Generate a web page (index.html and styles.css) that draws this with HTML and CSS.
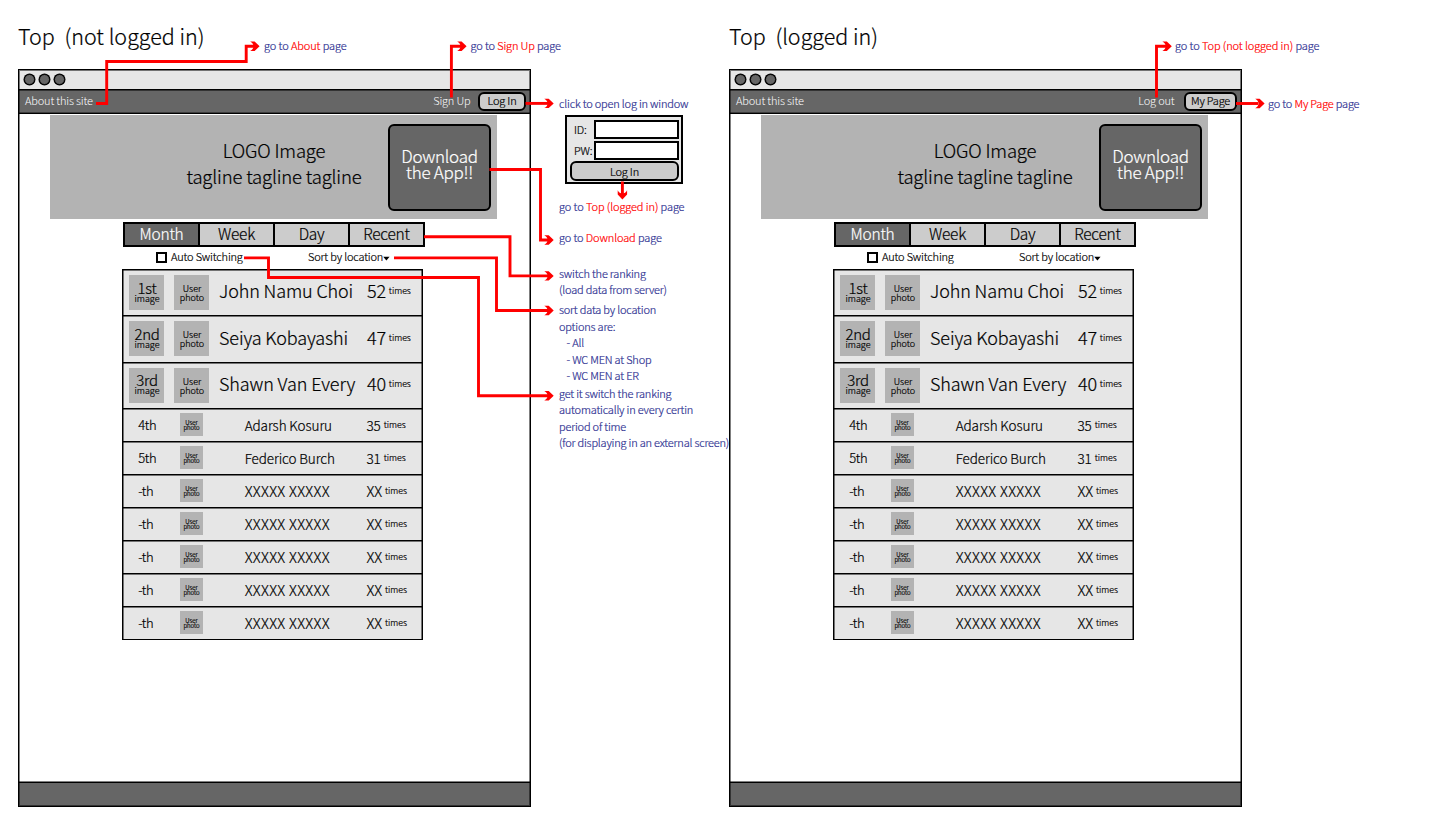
FILE: index.html
```html
<!DOCTYPE html>
<html lang="en">
<head>
<meta charset="utf-8">
<title>Top page wireframe</title>
<link rel="stylesheet" href="styles.css">
</head>
<body>
<main class="sheet">
  <section class="board" data-board="out">
    <header class="board-head">
      <h1 class="board-title">Top&nbsp; (not logged in)</h1>
      <p class="note note-about">go to <b>About</b> page</p>
      <p class="note note-signup">go to <b>Sign Up</b> page</p>
    </header>
    <div class="window">
      <div class="titlebar"><i class="dot"></i><i class="dot"></i><i class="dot"></i></div>
      <nav class="nav"><a class="nav-about">About this site</a><a class="nav-link">Sign Up</a><button class="nav-button">Log In</button></nav>
      <div class="page"></div>
      <footer class="footer"></footer>
    </div>
  </section>

  <aside class="notes">
    <p class="note">click to open log in window</p>
    <form class="login">
      <label class="field"><span class="field-name">ID:</span><span class="input"></span></label>
      <label class="field"><span class="field-name">PW:</span><span class="input"></span></label>
      <button class="login-button" type="button">Log In</button>
    </form>
    <p class="note note-top">go to <b>Top (logged in)</b> page</p>
    <p class="note note-download">go to <b>Download</b> page</p>
    <p class="note note-switch">switch the ranking<br>(load data from server)</p>
    <div class="note note-sort">sort data by location<br>options are:
      <ul class="note-list"><li>- All</li><li>- WC MEN at Shop</li><li>- WC MEN at ER</li></ul>
    </div>
    <p class="note note-auto">get it switch the ranking<br>automatically in every certin<br>period of time<br>(for displaying in an external screen)</p>
  </aside>

  <section class="board" data-board="in">
    <header class="board-head">
      <h1 class="board-title">Top&nbsp; (logged in)</h1>
      <p class="note note-logout">go to <b>Top (not logged in)</b> page</p>
    </header>
    <div class="window">
      <div class="titlebar"><i class="dot"></i><i class="dot"></i><i class="dot"></i></div>
      <nav class="nav"><a class="nav-about">About this site</a><a class="nav-link nav-link-out">Log out</a><button class="nav-button nav-button-wide">My Page</button></nav>
      <div class="page"></div>
      <footer class="footer"></footer>
    </div>
  </section>

  <aside class="notes notes-right">
    <p class="note">go to <b>My Page</b> page</p>
  </aside>

  <svg class="arrows" width="1440" height="840" viewBox="0 0 1440 840">
    <defs>
      <path id="head" d="M0 0L-5 -4.7H-9.4Q-6.2 -3 -6.2 0Q-6.2 3 -9.4 4.7H-5Z"/>
    </defs>
    <g class="arrow-lines">
      <path d="M96 103.5H106.7V61.5H246.2V46.3H254"/>
      <path d="M451.4 97.5V46.3H461"/>
      <path d="M525.5 103.4H548"/>
      <path d="M489.5 169.5H540.5V240H548"/>
      <path d="M424 236.8H510V275.9H548"/>
      <path d="M394 257.9H496.5V310.5H548"/>
      <path d="M244 257.9H268.5V277.5H478.5V395.8H548"/>
      <path d="M622.4 181.5V194"/>
      <path d="M1156.5 97.5V46.3H1166"/>
      <path d="M1236 103.5H1258"/>
    </g>
    <g class="arrow-heads">
      <use href="#head" x="259.6" y="46.3"/>
      <use href="#head" x="466.6" y="46.3"/>
      <use href="#head" x="553.7" y="103.4"/>
      <use href="#head" x="553.7" y="240"/>
      <use href="#head" x="553.7" y="275.9"/>
      <use href="#head" x="553.7" y="310.5"/>
      <use href="#head" x="553.7" y="395.8"/>
      <use href="#head" transform="translate(622.4 199.6) rotate(90)"/>
      <use href="#head" x="1171.8" y="46.3"/>
      <use href="#head" x="1264.6" y="103.5"/>
    </g>
  </svg>
</main>

<template id="page-template">
  <div class="banner">
    <div class="banner-text">LOGO Image<br>tagline tagline tagline</div>
    <div class="download">Download<br>the App!!</div>
  </div>
  <div class="tabs">
    <span class="tab tab-active">Month</span><span class="tab">Week</span><span class="tab">Day</span><span class="tab">Recent</span>
  </div>
  <div class="options">
    <span class="checkbox"></span><span class="option-auto">Auto Switching</span>
    <span class="option-sort">Sort by location</span>
    <svg class="caret" width="7" height="5" viewBox="0 0 7 5"><path d="M0.2 0.7H6.6L3.4 4.4Z"/></svg>
  </div>
  <div class="ranking"></div>
</template>
<script src="ranking.js"></script>
</body>
</html>
```
FILE: ranking.js
```js
const leaders = [
  ["1st", "John Namu Choi", "52"],
  ["2nd", "Seiya Kobayashi", "47"],
  ["3rd", "Shawn Van Every", "40"]
];
const others = [
  ["4th", "Adarsh Kosuru", "35"],
  ["5th", "Federico Burch", "31"]
];
for (let i = 0; i < 5; i++) others.push(["-th", "XXXXX XXXXX", "XX"]);

const leaderRow = ([rank, name, count]) => `
  <div class="row row-leader">
    <div class="tile"><span class="tile-rank">${rank}</span><span class="tile-label">image</span></div>
    <div class="tile tile-user">User<br>photo</div>
    <div class="name">${name}</div>
    <div class="count">${count}<small class="times">times</small></div>
  </div>`;

const plainRow = ([rank, name, count]) => `
  <div class="row row-plain">
    <div class="rank">${rank}</div>
    <div class="thumb"><span>User<br>photo</span></div>
    <div class="name${name.startsWith("X") ? " name-blank" : ""}">${name}</div>
    <div class="count"><span class="${count === "XX" ? "count-blank" : ""}">${count}</span><small class="times">times</small></div>
  </div>`;

const template = document.getElementById("page-template");
document.querySelectorAll(".page").forEach(page => {
  page.appendChild(template.content.cloneNode(true));
  page.querySelector(".ranking").innerHTML =
    leaders.map(leaderRow).join("") + others.map(plainRow).join("");
});
```
FILE: styles.css
```css
* { box-sizing: border-box; }

body {
  margin: 0;
  background: #fff;
  color: #000;
  font: 300 11px/16.5px "Noto Sans CJK JP", "Open Sans", sans-serif;
  letter-spacing: -0.18px;
  -webkit-text-stroke: 0.2px currentColor;
}

h1, p, ul { margin: 0; padding: 0; font-weight: 300; }
b { font-weight: 300; color: #f00; -webkit-text-stroke-color: #f00; }
button { padding: 0; font: inherit; letter-spacing: inherit; color: #000; }

.sheet {
  position: relative;
  display: flex;
  align-items: flex-start;
  width: 1440px;
  height: 840px;
  padding-left: 18px;
  overflow: hidden;
}

.board { flex: none; width: 513px; }

.board-head {
  display: flex;
  height: 69px;
  padding-top: 21px;
  white-space: pre;
}

.board-title {
  flex: none;
  width: 246px;
  font-size: 21.5px;
  line-height: 29px;
  letter-spacing: 0;
}

.note { color: #2e3192; white-space: nowrap; letter-spacing: -0.2px; }
.note-about { flex: none; width: 206.5px; padding-top: 16px; letter-spacing: -0.1px; }
.note-signup { padding-top: 16px; letter-spacing: -0.14px; }
.note-logout { margin-left: 200px; padding-top: 16px; letter-spacing: -0.1px; }

/* browser window */
.window {
  position: relative;
  display: flex;
  flex-direction: column;
  height: 738px;
  border: 1px solid #000;
}

.window::after {
  content: "";
  position: absolute;
  inset: 0;
  box-shadow: inset 0 0 0 1px rgba(0, 0, 0, .5);
  pointer-events: none;
}

.titlebar {
  display: flex;
  align-items: center;
  gap: 3.8px;
  height: 20px;
  padding: 0 0 0 5px;
  background: #e6e6e6;
  border-bottom: 1px solid #000;
}

.dot {
  width: 11px;
  height: 11px;
  border: 1.6px solid #000;
  border-radius: 50%;
  background: #666;
  box-shadow: 0 0 0 .5px #000;
}

.nav {
  display: flex;
  align-items: center;
  height: 24px;
  padding: 0 4px 1px 6px;
  background: #666;
  border-bottom: 1px solid #000;
  box-shadow: inset 0 1px rgba(0, 0, 0, .5), inset 0 -1px rgba(0, 0, 0, .4);
  color: #fff;
  -webkit-text-stroke: 0;
}

.nav-about, .nav-link { margin-top: -1px; }
.nav-about { flex: 1; }
.nav-link { margin-right: 7.5px; }
.nav-link-out { margin-right: 8.5px; }

.nav-button {
  width: 48px;
  height: 19px;
  margin-top: 1px;
  padding-bottom: 2px;
  border: 2px solid #000;
  border-radius: 6px;
  background: #ccc;
  line-height: 13px;
  -webkit-text-stroke: 0.2px #000;
}

.nav-button-wide { width: 53px; margin-left: 1px; }

.footer {
  height: 24px;
  margin-top: auto;
  border-top: 1px solid #000;
  background: #666;
  box-shadow: 0 -1px rgba(0, 0, 0, .5);
}

/* banner */
.banner {
  display: grid;
  align-items: center;
  width: 447px;
  height: 104px;
  margin: 1px 0 0 31px;
  background: #b3b3b3;
}

.banner-text, .download { grid-area: 1 / 1; text-align: center; }

.banner-text {
  padding: 0 0 7px 1px;
  font-size: 18.5px;
  line-height: 25.6px;
  letter-spacing: -0.16px;
}

.download {
  justify-self: end;
  width: 103px;
  height: 87px;
  margin-right: 6px;
  padding-top: 22px;
  border: 2px solid #000;
  border-radius: 6px;
  background: #666;
  color: #fff;
  font-size: 17px;
  line-height: 16.5px;
  letter-spacing: -0.27px;
}

/* tabs and options */
.tabs {
  display: grid;
  grid-template-columns: 73px 75px 75px 1fr;
  width: 302px;
  height: 25px;
  margin: 3px 0 0 104px;
  border: 2px solid #000;
}

.tab {
  background: #ccc;
  text-align: center;
  font-size: 15.5px;
  line-height: 18px;
  letter-spacing: -0.25px;
}

.tab + .tab { border-left: 2px solid #000; }
.tab-active { background: #666; color: #fff; }

.options {
  display: flex;
  align-items: center;
  height: 22px;
  padding: 0 0 4px 137px;
}

.checkbox {
  width: 11px;
  height: 11px;
  margin-right: 4px;
  margin-top: 3px;
  border: 2px solid #000;
}

.option-auto { width: 137px; }
.option-sort { width: 75px; white-space: nowrap; }
.caret { margin-top: 4px; fill: #000; }

/* ranking */
.ranking {
  width: 301px;
  margin-left: 103px;
  border: 1px solid #000;
  border-bottom: 0;
  background: #e6e6e6;
}

.row {
  display: grid;
  grid-template-columns: 35px 35px 137.5px 1fr;
  column-gap: 10px;
  align-items: center;
  padding-left: 6px;
  border-bottom: 1px solid #000;
  box-shadow: inset 0 1px rgba(0, 0, 0, .5), inset 1px 0 rgba(0, 0, 0, .5), inset -1px 0 rgba(0, 0, 0, .5);
  white-space: nowrap;
}

.row-leader { height: 46.333px; font-size: 18px; letter-spacing: -0.12px; }
.row-plain { height: 33px; font-size: 13.5px; letter-spacing: -0.1px; }

.tile {
  display: flex;
  flex-direction: column;
  justify-content: center;
  width: 35px;
  height: 35px;
  background: #b3b3b3;
  text-align: center;
  line-height: 11px;
}

.tile-rank { padding-left: 1px; font-size: 15px; letter-spacing: -0.3px; }
.tile-label { padding-left: 1px; font-size: 9px; letter-spacing: 0; }

.tile-user {
  display: block;
  padding: 9px 0 0 1px;
  font-size: 9px;
  line-height: 9px;
  letter-spacing: 0;
}

.rank { padding-left: 9.2px; font-size: 13px; letter-spacing: -0.4px; }

.thumb {
  justify-self: center;
  width: 23px;
  height: 23px;
  padding-top: 7px;
  background: #b3b3b3;
  text-align: center;
  font: 300 6px/5px "Noto Sans CJK JP", sans-serif;
  letter-spacing: 0;
}

.row-leader .name, .row-leader .count { padding-bottom: 4px; }
.row-plain .name { padding-left: 25.7px; }
.row-plain .name-blank { font-size: 14.5px; letter-spacing: 0.32px; }

.count { display: flex; align-items: center; padding-left: .5px; }
.row-plain .count { padding-left: 0; }
.count-blank { font-size: 14.5px; letter-spacing: -0.1px; }

.times { margin: 2px 0 0 2.8px; font-size: 8.8px; letter-spacing: 0; }
.row-plain .times { margin: 1px 0 0 3px; }

/* annotations */
.notes { flex: none; width: 198px; padding: 94.7px 0 0 28px; }
.notes-right { padding-left: 26px; }
.notes-right .note { letter-spacing: -0.18px; }

.login {
  display: flex;
  flex-direction: column;
  gap: 2px;
  width: 118px;
  height: 69px;
  margin: 4px 0 0 6px;
  padding: 3px 3px 0;
  border: 2px solid #000;
  background: #e6e6e6;
}

.field { display: flex; align-items: center; height: 19px; padding-left: 4px; }
.field-name { flex: none; width: 20px; line-height: 17px; white-space: nowrap; }
.input { flex: none; width: 85px; height: 19px; border: 2px solid #000; background: #fff; }

.login-button {
  width: 109px;
  height: 20px;
  margin-top: -1px;
  border: 2px solid #000;
  border-radius: 6px;
  background: #ccc;
  line-height: 14px;
}

.note-top { margin-top: 14px; letter-spacing: -0.1px; }
.note-download { margin-top: 14.8px; letter-spacing: -0.12px; }
.note-switch { margin-top: 18.8px; }
.note-sort { margin-top: 3.5px; }
.note-auto { margin-top: 1px; }
.note-list { padding-left: 7.5px; list-style: none; }

.arrows { position: absolute; left: 0; top: 0; pointer-events: none; }
.arrow-lines { fill: none; stroke: #f00; stroke-width: 2.9; }
.arrow-heads { fill: #f00; }
```
